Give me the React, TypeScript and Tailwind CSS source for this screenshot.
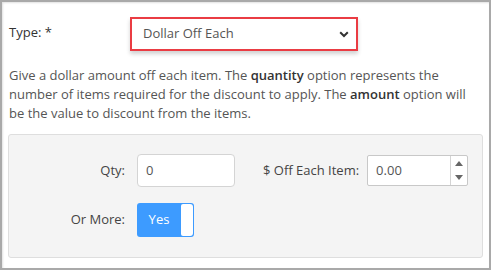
import React from "react";

export default function App() {
  return (
    <div
      className="w-[491px] h-[270px] bg-white border-2 border-[#a9a9a9] shadow-[inset_1px_1px_2px_rgba(0,0,0,0.12)] relative text-[13px] text-[#333]"
      style={{ fontFamily: '"Open Sans", "Liberation Sans", sans-serif' }}
    >
      <div className="flex items-start pt-[15px] pl-[7px]">
        <div className="w-[121px] pt-[6px] leading-[19px] text-[#333]">Type: *</div>
        <div className="w-[228px] h-[34px] border-2 border-[#ea3c43] bg-white shadow-[0_3px_4px_rgba(0,0,0,0.18)] flex items-center justify-between pl-[11px] pr-[7px]">
          <span className="text-[#555]">Dollar Off Each</span>
          <svg width="10" height="7" viewBox="0 0 10 7">
            <path d="M1.2 1.3 L5 5 L8.8 1.3" fill="none" stroke="#333" strokeWidth="2" />
          </svg>
        </div>
      </div>
      <p className="pl-[7px] pr-[20px] mt-[15px] leading-[19px] text-[#555]">
        Give a dollar amount off each item. The <b className="font-semibold text-[#333]">quantity</b> option represents the number of items required for the discount to apply. The <b className="font-semibold text-[#333]">amount</b> option will be the value to discount from the items.
      </p>
      <div className="mx-[6px] mt-[11px] w-[475px] h-[124px] bg-[#f4f4f4] border border-[#dedede] rounded-[3px] pt-[19px]">
        <div className="flex items-center">
          <div className="w-[116px] text-right text-[#444]">Qty:</div>
          <div className="ml-[12px] w-[98px] h-[33px] bg-white border border-[#d4d4d4] rounded-[4px] flex items-center pl-[8px] text-[#555]">0</div>
          <div className="ml-[28px] text-[#444]">$ Off Each Item:</div>
          <div className="ml-[8px] w-[101px] h-[31px] bg-white border border-[#c8c8c8] rounded-[2px] flex">
            <div className="flex-1 flex items-center pl-[8px] text-[#555]">0.00</div>
            <div className="w-[17px] border-l border-[#d4d4d4] flex flex-col items-center justify-center gap-[9px]">
              <svg width="8" height="5" viewBox="0 0 8 5"><path d="M0 5 L4 0 L8 5Z" fill="#666" /></svg>
              <svg width="8" height="5" viewBox="0 0 8 5"><path d="M0 0 L4 5 L8 0Z" fill="#666" /></svg>
            </div>
          </div>
        </div>
        <div className="flex items-center mt-[16px]">
          <div className="w-[116px] text-right text-[#444]">Or More:</div>
          <div className="ml-[12px] w-[57px] h-[34px] bg-[#3d9bff] rounded-[3px] flex items-center">
            <span className="w-[44px] text-center text-white">Yes</span>
            <div className="w-[12px] h-[32px] bg-white rounded-r-[3px] rounded-l-[2px]" />
          </div>
        </div>
      </div>
    </div>
  );
}
